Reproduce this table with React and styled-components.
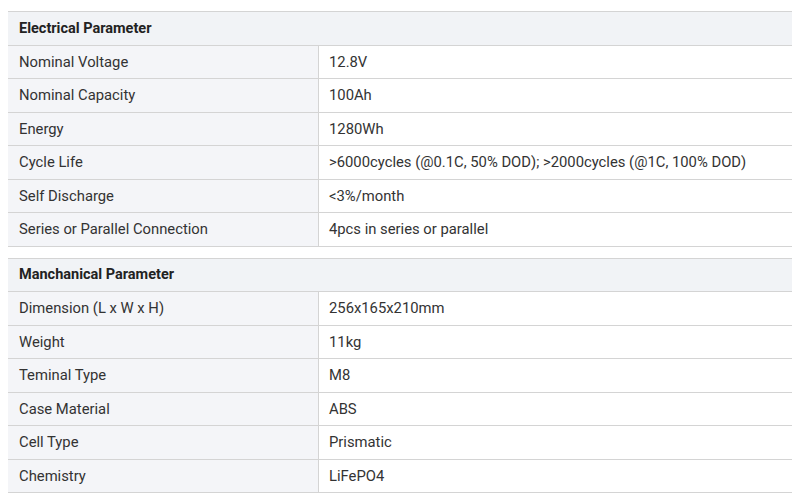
import React from 'react';
import styled, {createGlobalStyle} from 'styled-components';

const Global = createGlobalStyle`
  body {
    margin: 0;
    background: #ffffff;
    font-family: Roboto, "Liberation Sans", Arial, sans-serif;
  }
`

const Page = styled.div`
  padding: 11px 8px 0 8px;
  display: flex;
  flex-direction: column;
  gap: 11px;
`

const Section = styled.div`
  border-top: 1px solid #d4d4d4;
`

const HeadRow = styled.div`
  height: 33.5px;
  box-sizing: border-box;
  border-bottom: 1px solid #d4d4d4;
  background: #f1f3f6;
  display: flex;
  align-items: center;
  padding-left: 11px;
  font-size: 14.5px;
  font-weight: 700;
  color: #222;
`

const Row = styled.div`
  display: grid;
  grid-template-columns: 311px 1fr;
  height: 33.5px;
  box-sizing: border-box;
  border-bottom: 1px solid #d4d4d4;
`

const Cell = styled.div`
  display: flex;
  align-items: center;
  padding-left: ${p => (p.$label ? '11px' : '10px')};
  background: ${p => (p.$label ? '#f4f5f8' : '#ffffff')};
  border-right: ${p => (p.$label ? '1px solid #d4d4d4' : 'none')};
  font-size: 14.8px;
  color: #333;
  white-space: nowrap;
`

const sections = [
  {
    title: 'Electrical Parameter',
    rows: [
      ['Nominal Voltage', '12.8V'],
      ['Nominal Capacity', '100Ah'],
      ['Energy', '1280Wh'],
      ['Cycle Life', '>6000cycles (@0.1C, 50% DOD); >2000cycles (@1C, 100% DOD)'],
      ['Self Discharge', '<3%/month'],
      ['Series or Parallel Connection', '4pcs in series or parallel'],
    ],
  },
  {
    title: 'Manchanical Parameter',
    rows: [
      ['Dimension (L x W x H)', '256x165x210mm'],
      ['Weight', '11kg'],
      ['Teminal Type', 'M8'],
      ['Case Material', 'ABS'],
      ['Cell Type', 'Prismatic'],
      ['Chemistry', 'LiFePO4'],
    ],
  },
]

function App() {
  return (
    <Page>
      <Global />
      {sections.map(s => (
        <Section key={s.title}>
          <HeadRow>{s.title}</HeadRow>
          {s.rows.map(([k, v]) => (
            <Row key={k}>
              <Cell $label>{k}</Cell>
              <Cell>{v}</Cell>
            </Row>
          ))}
        </Section>
      ))}
    </Page>
  );
}

export default App
